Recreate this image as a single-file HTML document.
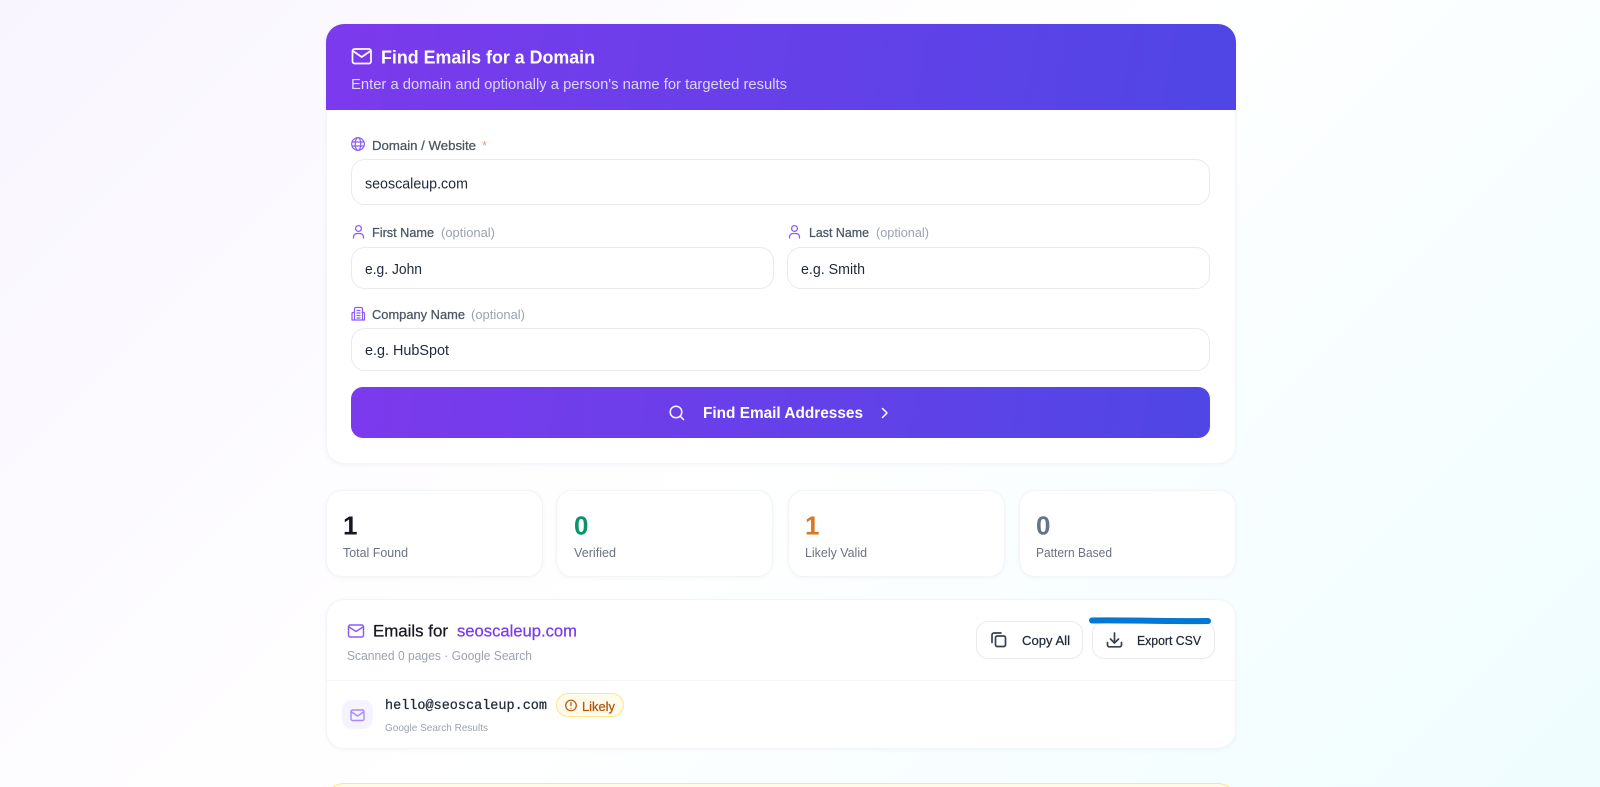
<!DOCTYPE html>
<html lang="en">
<head>
<meta charset="utf-8">
<title>Find Emails for a Domain</title>
<style>
html,body{margin:0;padding:0;width:1600px;height:787px;overflow:hidden}
#page{position:absolute;left:0;top:0;width:1600px;height:787px;overflow:hidden;background:linear-gradient(135deg,#f9f5ff 0%,#ffffff 50%,#effdff 100%);font-family:"Liberation Sans",sans-serif}
div{box-sizing:border-box}
.a{position:absolute}
.card{position:absolute;background:#fff;border:1px solid #f3f4f6;box-shadow:0 1px 4px rgba(120,120,160,.07)}
.input{position:absolute;background:#fff;border:1.5px solid #e9eaee;border-radius:14px}
.stat{position:absolute;top:490px;height:87px;width:217px;background:#fff;border:1px solid #f3f4f6;border-radius:16px;box-shadow:0 1px 4px rgba(120,120,160,.07)}
.btn{position:absolute;top:621px;height:38px;background:#fff;border:1.5px solid #e9eaee;border-radius:12px}
svg{position:absolute;left:0;top:0}
text{font-family:"Liberation Sans",sans-serif}
.m{stroke-width:.25px;paint-order:stroke}
</style>
</head>
<body>
<div id="page">
<div class="card" style="left:326px;top:24px;width:910px;height:440px;border-radius:18px"></div>
<div class="a" style="left:326px;top:24px;width:910px;height:86px;border-radius:18px 18px 0 0;background:linear-gradient(100deg,#7c3aed,#4f46e5)"></div>
<div class="input" style="left:351px;top:159px;width:859px;height:46px"></div>
<div class="input" style="left:351px;top:247px;width:423px;height:42px"></div>
<div class="input" style="left:787px;top:247px;width:423px;height:42px"></div>
<div class="input" style="left:351px;top:328px;width:859px;height:43px"></div>
<div class="a" style="left:351px;top:387px;width:859px;height:51px;border-radius:12px;background:linear-gradient(100deg,#7c3aed,#4f46e5)"></div>

<div class="stat" style="left:326px"></div>
<div class="stat" style="left:556px"></div>
<div class="stat" style="left:788px"></div>
<div class="stat" style="left:1019px"></div>

<div class="card" style="left:326px;top:599px;width:910px;height:150px;border-radius:18px"></div>
<div class="a" style="left:326px;top:680px;width:910px;height:1px;background:#f3f4f6"></div>
<div class="a" style="left:342px;top:700px;width:31px;height:29px;border-radius:10px;background:#f5f3ff"></div>
<div class="a" style="left:556px;top:693px;width:68px;height:24px;border-radius:12px;background:#fffbeb;border:1px solid #fde68a"></div>
<div class="btn" style="left:976px;width:107px"></div>
<div class="btn" style="left:1092px;width:123px"></div>
<div class="a" style="left:326px;top:783px;width:910px;height:20px;border-radius:18px 18px 0 0;background:#fffbeb;border:1.5px solid #fde68a"></div>

<svg width="1600" height="787" viewBox="0 0 1600 787" xmlns="http://www.w3.org/2000/svg">
  <!-- header -->
  <g fill="none" stroke="#fff" stroke-width="1.7" stroke-linecap="round" stroke-linejoin="round">
    <rect x="352.5" y="49" width="18.5" height="14.5" rx="2"/>
    <path d="M353 51l8.7 6 8.8-6"/>
  </g>
  <text x="381" y="63.5" font-size="18.5" font-weight="700" fill="#fff" textLength="214" lengthAdjust="spacingAndGlyphs">Find Emails for a Domain</text>
  <text x="351" y="89" font-size="14.5" fill="#ddd6fe" textLength="436" lengthAdjust="spacingAndGlyphs">Enter a domain and optionally a person's name for targeted results</text>

  <!-- domain -->
  <g fill="none" stroke="#8b5cf6" stroke-width="1.2">
    <circle cx="358" cy="144" r="6.3"/>
    <ellipse cx="358" cy="144" rx="2.8" ry="6.3"/>
    <path d="M352 142h12M352 146h12"/>
  </g>
  <text x="372" y="150" font-size="13" fill="#4b5563" stroke="#4b5563" class="m" textLength="104" lengthAdjust="spacingAndGlyphs">Domain / Website</text>
  <text x="482" y="150" font-size="13" fill="#e8a27c">*</text>
  <text x="365" y="188.5" font-size="15" fill="#1f2937" textLength="103" lengthAdjust="spacingAndGlyphs">seoscaleup.com</text>

  <!-- first name -->
  <g fill="none" stroke="#8b5cf6" stroke-width="1.3" stroke-linecap="round">
    <circle cx="358.5" cy="228.5" r="2.9"/>
    <path d="M353.500 238v-1a3.5 3.5 0 0 1 3.5-3.5h3a3.5 3.5 0 0 1 3.5 3.5v1"/>
  </g>
  <text x="372" y="237" font-size="13" fill="#4b5563" stroke="#4b5563" class="m" textLength="62" lengthAdjust="spacingAndGlyphs">First Name</text>
  <text x="441" y="237" font-size="13" fill="#9ca3af" textLength="54" lengthAdjust="spacingAndGlyphs">(optional)</text>
  <text x="365" y="274" font-size="15" fill="#1f2937" textLength="57" lengthAdjust="spacingAndGlyphs">e.g. John</text>

  <!-- last name -->
  <g fill="none" stroke="#8b5cf6" stroke-width="1.3" stroke-linecap="round">
    <circle cx="794.5" cy="228.5" r="2.9"/>
    <path d="M789.500 238v-1a3.5 3.5 0 0 1 3.5-3.5h3a3.5 3.5 0 0 1 3.5 3.5v1"/>
  </g>
  <text x="809" y="237" font-size="13" fill="#4b5563" stroke="#4b5563" class="m" textLength="60" lengthAdjust="spacingAndGlyphs">Last Name</text>
  <text x="876" y="237" font-size="13" fill="#9ca3af" textLength="53" lengthAdjust="spacingAndGlyphs">(optional)</text>
  <text x="801" y="274" font-size="15" fill="#1f2937" textLength="64" lengthAdjust="spacingAndGlyphs">e.g. Smith</text>

  <!-- company -->
  <g fill="none" stroke="#8b5cf6" stroke-width="1.2" stroke-linejoin="round" stroke-linecap="round">
    <path d="M354.500 320v-11a1.5 1.5 0 0 1 1.5-1.5h5a1.5 1.5 0 0 1 1.500 1.500v11"/>
    <path d="M354.500 312.500h-1.500a1 1 0 0 0-1 1V320h12.500v-6.500a1 1 0 0 0-1-1h-1.500"/>
    <path d="M357 310.500h3M357 313h3M357 315.500h3M357 318h3"/>
  </g>
  <text x="372" y="319" font-size="13" fill="#4b5563" stroke="#4b5563" class="m" textLength="93" lengthAdjust="spacingAndGlyphs">Company Name</text>
  <text x="471" y="319" font-size="13" fill="#9ca3af" textLength="54" lengthAdjust="spacingAndGlyphs">(optional)</text>
  <text x="365" y="355" font-size="15" fill="#1f2937" textLength="84" lengthAdjust="spacingAndGlyphs">e.g. HubSpot</text>

  <!-- submit -->
  <g fill="none" stroke="#fff" stroke-width="1.5" stroke-linecap="round" stroke-linejoin="round">
    <circle cx="676" cy="412" r="5.800"/>
    <path d="M680.500 416.500l3 3"/>
    <path d="M882.500 408.500l4.500 4.500-4.500 4.500"/>
  </g>
  <text x="703" y="418" font-size="16" font-weight="700" fill="#fff" textLength="160" lengthAdjust="spacingAndGlyphs">Find Email Addresses</text>

  <!-- stats -->
  <text x="343" y="534.500" font-size="26" font-weight="700" fill="#1a1523">1</text>
  <text x="343" y="557" font-size="13" fill="#6b7280" textLength="65" lengthAdjust="spacingAndGlyphs">Total Found</text>
  <text x="574" y="534.500" font-size="26" font-weight="700" fill="#059669">0</text>
  <text x="574" y="557" font-size="13" fill="#6b7280" textLength="42" lengthAdjust="spacingAndGlyphs">Verified</text>
  <text x="805" y="534.500" font-size="26" font-weight="700" fill="#d97722">1</text>
  <text x="805" y="557" font-size="13" fill="#6b7280" textLength="62" lengthAdjust="spacingAndGlyphs">Likely Valid</text>
  <text x="1036" y="534.500" font-size="26" font-weight="700" fill="#64748b">0</text>
  <text x="1036" y="557" font-size="13" fill="#6b7280" textLength="76" lengthAdjust="spacingAndGlyphs">Pattern Based</text>

  <!-- results header -->
  <g fill="none" stroke="#8b5cf6" stroke-width="1.500" stroke-linecap="round" stroke-linejoin="round">
    <rect x="348.500" y="625" width="15" height="12" rx="1.800"/>
    <path d="M349 627l7 4.500 7-4.500"/>
  </g>
  <text x="373" y="636.500" font-size="16.500" fill="#1a1523" stroke="#1a1523" class="m" textLength="75" lengthAdjust="spacingAndGlyphs">Emails for</text>
  <text x="457" y="636.500" font-size="16.500" fill="#7c3aed" stroke="#7c3aed" class="m" textLength="120" lengthAdjust="spacingAndGlyphs">seoscaleup.com</text>
  <text x="347" y="660" font-size="12.500" fill="#9ca3af" textLength="185" lengthAdjust="spacingAndGlyphs">Scanned 0 pages · Google Search</text>

  <!-- copy all -->
  <g fill="none" stroke="#374151" stroke-width="1.700" stroke-linecap="round" stroke-linejoin="round">
    <rect x="995.500" y="636" width="10" height="10.500" rx="1.800"/>
    <path d="M992 642.500v-7.500a2 2 0 0 1 2-2h7"/>
  </g>
  <text x="1022" y="645" font-size="13" fill="#1f2937" stroke="#1f2937" class="m" textLength="48" lengthAdjust="spacingAndGlyphs">Copy All</text>

  <!-- export csv -->
  <g fill="none" stroke="#374151" stroke-width="1.700" stroke-linecap="round" stroke-linejoin="round">
    <path d="M1114.500 633v9M1110.500 639l4 4 4-4"/>
    <path d="M1107.500 642.500v2.500a1.800 1.800 0 0 0 1.800 1.800h10.400a1.800 1.800 0 0 0 1.800-1.800v-2.500"/>
  </g>
  <text x="1137" y="645" font-size="13" fill="#1f2937" stroke="#1f2937" class="m" textLength="64" lengthAdjust="spacingAndGlyphs">Export CSV</text>

  <!-- blue scribble -->
  <path d="M1092 620.500C1130 620 1170 621.500 1208 621" fill="none" stroke="#0078d4" stroke-width="6" stroke-linecap="round"/>

  <!-- row -->
  <g fill="none" stroke="#a78bfa" stroke-width="1.400" stroke-linecap="round" stroke-linejoin="round">
    <rect x="351" y="710" width="13" height="10.500" rx="1.500"/>
    <path d="M351.500 712l6 4 6-4"/>
  </g>
  <text x="385" y="709" font-size="13.500" fill="#1f2937" stroke="#1f2937" class="m" style='font-family:"Liberation Mono",monospace' textLength="162" lengthAdjust="spacingAndGlyphs">hello@seoscaleup.com</text>
  <text x="385" y="731" font-size="10.500" fill="#9ca3af" textLength="103" lengthAdjust="spacingAndGlyphs">Google Search Results</text>
  <g fill="none" stroke="#b45309" stroke-width="1.200" stroke-linecap="round">
    <circle cx="571" cy="705.500" r="5.300"/>
    <path d="M571 702.500v3.300M571 708.300v.1"/>
  </g>
  <text x="582" y="711" font-size="13" fill="#b45309" stroke="#b45309" class="m" textLength="33" lengthAdjust="spacingAndGlyphs">Likely</text>
</svg>
</div>
</body>
</html>
